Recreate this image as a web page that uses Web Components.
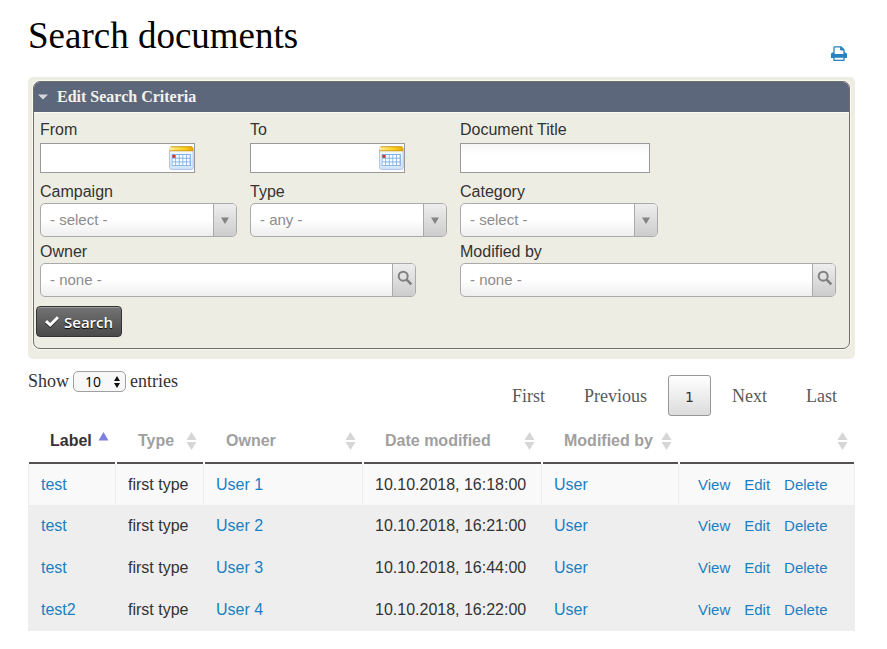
<!DOCTYPE html>
<html lang="en">
<head>
<meta charset="utf-8">
<meta name="viewport" content="width=device-width, initial-scale=1">
<title>Search documents</title>
<style>
  body {
    margin: 0;
    padding: 0 32px 0 28px;
    background: #fff;
    color: #333;
    font: 16px/20px "Liberation Sans", Arial, sans-serif;
    --serif: "Liberation Serif", serif;
    --link: #1b7fc1;
  }
</style>
</head>
<body>
<page-header>Search documents</page-header>

<search-panel>
  <span slot="title">Edit Search Criteria</span>
  <date-field label="From"></date-field>
  <date-field label="To"></date-field>
  <text-field label="Document Title"></text-field>
  <select-field label="Campaign" value="- select -"></select-field>
  <select-field label="Type" value="- any -"></select-field>
  <select-field label="Category" value="- select -" class="narrow"></select-field>
  <lookup-field label="Owner" value="- none -" class="wide"></lookup-field>
  <lookup-field label="Modified by" value="- none -"></lookup-field>
  <search-button slot="action">Search</search-button>
</search-panel>

<table-toolbar>
  <page-size></page-size>
  <page-nav slot="end"></page-nav>
</table-toolbar>
<results-table></results-table>

<script>
function define(name, html, setup) {
  const template = document.createElement('template');
  template.innerHTML = html;
  customElements.define(name, class extends HTMLElement {
    connectedCallback() {
      if (this.shadowRoot) return;
      const root = this.attachShadow({ mode: 'open' });
      root.appendChild(template.content.cloneNode(true));
      if (setup) setup(this, root);
    }
  });
}

define('page-header', `
  <style>
    :host { display: flex; justify-content: space-between; align-items: flex-start; padding-bottom: 15px; }
    h1 { margin: 0; padding-top: 12px; font: 400 37px/48px var(--serif); color: #000; }
    a { display: block; margin: 46px 8px 0 0; height: 16px; }
    svg { display: block; }
  </style>
  <h1><slot></slot></h1>
  <a href="#print" aria-label="Print">
    <svg width="16" height="16" viewBox="0 0 16 16">
      <path d="M3 8V1.5Q3 .8 3.7.8H10L13 3.8V8" fill="#fff" stroke="#2583c4" stroke-width="1.3"/>
      <path d="M9.6.8V4H13" fill="#2583c4" stroke="#2583c4"/>
      <path d="M1.7 6.6H3V8H13V6.6H14.3Q16 6.6 16 8.3V12H0V8.3Q0 6.6 1.7 6.6Z" fill="#2583c4"/>
      <path d="M3 11H13V14.4H3Z" fill="#fff" stroke="#2583c4" stroke-width="1.3"/>
    </svg>
  </a>`);

define('search-panel', `
  <style>
    :host { display: block; background: #edede3; border-radius: 5px; padding: 4px 5px 10px; }
    details { border: 1px solid #6e7067; border-radius: 7px; box-shadow: 0 0 0 1px #f9f9f2; overflow: hidden; }
    summary { display: flex; align-items: center; gap: 9px; height: 30px; padding-left: 4px;
      background: #5d677b; color: #f2f2ea; font: 700 16px/20px var(--serif); list-style: none; cursor: pointer; }
    summary::-webkit-details-marker { display: none; }
    .body { padding: 7px 13px 11px 2px; border-top: 1px solid #fafaf4; }
    .grid { display: grid; grid-template-columns: 197fr 197fr 376fr; column-gap: 13px; row-gap: 5px; padding-left: 4px; margin-bottom: 9px; }
    ::slotted(.wide) { grid-column: span 2; padding-right: 31px; }
    ::slotted(.narrow) { max-width: 198px; }
  </style>
  <details open>
    <summary><svg width="10" height="6"><path d="M0 .5H10L5 5.5Z" fill="#d4d7dd"/></svg><slot name="title"></slot></summary>
    <div class="body">
      <div class="grid"><slot></slot></div>
      <slot name="action"></slot>
    </div>
  </details>`);

const fieldCss = `
    :host { display: block; min-width: 0; box-sizing: border-box; }
    label { display: block; line-height: 20px; color: #333; }
    .box { display: flex; box-sizing: border-box; height: 34px; margin-top: 1px; border: 1px solid #aaa; border-radius: 5px;
      background: linear-gradient(#fff 50%, #eee); overflow: hidden; position: relative; }
    input { box-sizing: border-box; font: 15px/20px "Liberation Sans", Arial, sans-serif; }
`;
const setLabel = (host, root) => {
  root.querySelector('label').textContent = host.getAttribute('label');
};

define('text-field', `
  <style>${fieldCss}
    input { display: block; width: 190px; max-width: 100%; height: 30px; margin: 3px 0 4px; padding: 0 8px;
      border: 1px solid #999; background: linear-gradient(#f6f6f6, #fff 10px); }
  </style>
  <label for="f"></label><input id="f" type="text">`, setLabel);

let cells = '';
for (let r = 0; r < 3; r++)
  for (let c = 0; c < 5; c++)
    cells += `<rect x="${3.5 + c * 3.6}" y="${9 + r * 3.7}" width="2.7" height="2.7" fill="${r || c ? '#fff' : '#e8281e'}"/>`;

define('date-field', `
  <style>${fieldCss}
    .date { display: flex; align-items: center; box-sizing: border-box; width: 155px; max-width: 100%; height: 30px; margin: 3px 0 4px;
      border: 1px solid #999; background: #fff; }
    input { flex: 1; min-width: 0; height: 28px; padding: 0 8px; border: 0; background: none; }
    button { padding: 0; border: 0; background: none; height: 24px; }
    svg { display: block; }
  </style>
  <label for="f"></label>
  <div class="date"><input id="f" type="text">
    <button type="button" aria-label="Choose date">
      <svg width="25" height="24" viewBox="0 0 25 24">
        <defs>
          <linearGradient id="g" x2="1" y2="0"><stop stop-color="#fff0a0"/><stop offset=".6" stop-color="#ffd21c"/><stop offset="1" stop-color="#e5a800"/></linearGradient>
          <linearGradient id="b" x2="0" y2="1"><stop stop-color="#fff"/><stop offset="1" stop-color="#cfe4fa"/></linearGradient>
        </defs>
        <rect x=".6" y="1" width="23.6" height="22.4" rx="2" fill="url(#b)" stroke="#aebfe6"/>
        <path d="M.5 5V2.2Q.5.5 2.2.5H22.5Q24.2.5 24.2 2.2V5Z" fill="url(#g)"/>
        <path d="M.5 4.8H24.2M1.5.8H23" stroke="#c99522" stroke-width=".9"/>
        <rect x="2.7" y="8" width="19.2" height="12" fill="#7fb4e6"/>
        ${cells}
      </svg>
    </button>
  </div>`, setLabel);

define('select-field', `
  <style>${fieldCss}
    select { appearance: none; width: 100%; height: 32px; margin: 0; padding: 0 30px 0 9px; border: 0; background: none;
      color: #8c8c8c; font: 15px/20px "Liberation Sans", Arial, sans-serif; }
    .arrow { position: absolute; inset: 0 0 0 auto; width: 22px; display: flex; align-items: center; justify-content: center;
      border-left: 1px solid #aaa; background: linear-gradient(#eee, #ccc); pointer-events: none; }
  </style>
  <label for="f"></label>
  <div class="box">
    <select id="f"><option></option></select>
    <span class="arrow"><svg width="8" height="7"><path d="M0 .5H8L4 7Z" fill="#848484"/></svg></span>
  </div>`, (host, root) => {
  setLabel(host, root);
  root.querySelector('option').textContent = host.getAttribute('value');
});

define('lookup-field', `
  <style>${fieldCss}
    input { flex: 1; min-width: 0; padding: 0 9px; border: 0; background: none; }
    input::placeholder { color: #8c8c8c; opacity: 1; }
    button { width: 23px; padding: 0 0 4px 2px; border: 0; border-left: 1px solid #aaa; background: linear-gradient(#eee, #ccc);
      display: flex; align-items: center; justify-content: center; }
  </style>
  <label for="f"></label>
  <div class="box">
    <input id="f" type="text">
    <button type="button" aria-label="Look up">
      <svg width="16" height="16" viewBox="0 0 16 16" fill="none" stroke="#808080"><circle cx="6.2" cy="6.2" r="4.5" stroke-width="2"/><path d="M9.6 9.6L14.3 14.3" stroke-width="2.6"/></svg>
    </button>
  </div>`, (host, root) => {
  setLabel(host, root);
  root.querySelector('input').placeholder = host.getAttribute('value');
});

define('search-button', `
  <style>
    :host { display: block; }
    button { display: flex; align-items: center; gap: 5px; height: 31px; margin: 0; padding: 0 8px; border: 1px solid #333; border-radius: 4px;
      background: linear-gradient(#737373, #4a4a4a); box-shadow: inset 0 1px 0 #999; color: #fff;
      font: 600 15px/20px "Open Sans", "Noto Sans", sans-serif; text-shadow: 0 1px 1px #000; }
  </style>
  <button type="submit">
    <svg width="14" height="12" viewBox="0 0 14 12"><path d="M1 6.2L5.2 10L13 2" fill="none" stroke="#222" stroke-width="3"/><path d="M1 5.2L5.2 9L13 1.2" fill="none" stroke="#fff" stroke-width="3"/></svg>
    <slot></slot>
  </button>`);

define('table-toolbar', `
  <style>
    :host { display: flex; justify-content: space-between; align-items: flex-start; padding-top: 12px; font-family: var(--serif); font-size: 18px; }
    .end { padding-top: 4px; }
  </style>
  <slot></slot><div class="end"><slot name="end"></slot></div>`);

define('page-size', `
  <style>
    :host { display: block; color: #333; }
    label { display: flex; align-items: center; gap: 4px; line-height: 21px; }
    .pick { position: relative; display: flex; }
    select { appearance: none; width: 53px; height: 21px; margin: 0; padding: 0 0 0 11px; border: 1px solid #a0a0a0; border-radius: 5px;
      background: #f7f7f7; color: #000; font: 14px/18px "Open Sans", sans-serif; }
    svg { position: absolute; right: 6px; top: 5px; pointer-events: none; }
  </style>
  <label>Show
    <span class="pick"><select><option>10</option><option>25</option><option>50</option></select>
      <svg width="6" height="12"><path d="M0 5L3 0L6 5ZM0 7L3 12L6 7Z" fill="#111"/></svg></span>
    entries</label>`);

define('page-nav', `
  <style>
    nav { display: flex; gap: 3px; }
    button { height: 41px; margin: 0; padding: 0 18px; border: 0; background: none; color: #5a5a5a; font: 18px/22px var(--serif); }
    .current { min-width: 43px; padding: 2px 16px 0; border: 1px solid #979797; border-radius: 3px; background: linear-gradient(#fff, #dcdcdc);
      color: #333; font: 14px/20px "DejaVu Sans", sans-serif; }
  </style>
  <nav aria-label="Pages">
    <button type="button">First</button><button type="button">Previous</button>
    <button type="button" class="current" aria-current="page">1</button>
    <button type="button">Next</button><button type="button">Last</button>
  </nav>`);

const columns = ['Label', 'Type', 'Owner', 'Date modified', 'Modified by', ''];
const rows = [
  ['test', 'User 1', '16:18:00'],
  ['test', 'User 2', '16:21:00'],
  ['test', 'User 3', '16:44:00'],
  ['test2', 'User 4', '16:22:00'],
];
const sortIcon = i => i === 0
  ? '<svg width="11" height="18"><path d="M.5 8.5L5.5 0L10.5 8.5Z" fill="#7d80e0"/></svg>'
  : '<svg width="11" height="18"><path d="M.5 8L5.5 0L10.5 8ZM.5 10L5.5 18L10.5 10Z" fill="#d6d6d6"/></svg>';

define('results-table', `
  <style>
    :host { display: block; }
    table { width: 100%; table-layout: fixed; border-spacing: 0; }
    th { padding: 0 1px; }
    th button { display: flex; align-items: center; justify-content: space-between; box-sizing: border-box; width: 100%; height: 48px; margin: 0;
      padding: 3px 6px 0 21px; border: 0; border-bottom: 2px solid #545054; background: none; color: #a0a0a0;
      font: 700 16px/20px "Liberation Sans", Arial, sans-serif; white-space: nowrap; }
    th:first-child button { color: #333; }
    td { box-sizing: border-box; height: 42px; padding: 0 0 0 12px; background: #eee; line-height: 20px; white-space: nowrap; }
    tr:first-child td { height: 41px; background: #f9f9f9; border-right: 1px solid #eee; }
    tr:first-child td:first-child { border-left: 1px solid #eee; }
    td:first-child { padding-left: 13px; }
    tr:first-child td:first-child { padding-left: 12px; }
    a { color: var(--link); text-decoration: none; }
    td:last-child { padding-left: 19px; font-size: 15px; }
    .actions { display: flex; gap: 14px; }
  </style>
  <table>
    <colgroup><col style="width:88px"><col style="width:88px"><col style="width:159px"><col style="width:179px"><col style="width:137px"><col style="width:176px"></colgroup>
    <thead><tr>${columns.map((c, i) => `<th scope="col"><button type="button"${c ? '' : ' aria-label="Actions"'}><span>${c}</span>${sortIcon(i)}</button></th>`).join('')}</tr></thead>
    <tbody>${rows.map(([label, owner, time]) => `<tr>
      <td><a href="#document">${label}</a></td><td>first type</td><td><a href="#owner">${owner}</a></td>
      <td>10.10.2018, ${time}</td><td><a href="#user">User</a></td>
      <td><div class="actions"><a href="#view">View</a><a href="#edit">Edit</a><a href="#delete">Delete</a></div></td></tr>`).join('')}</tbody>
  </table>`);
</script>
</body>
</html>
